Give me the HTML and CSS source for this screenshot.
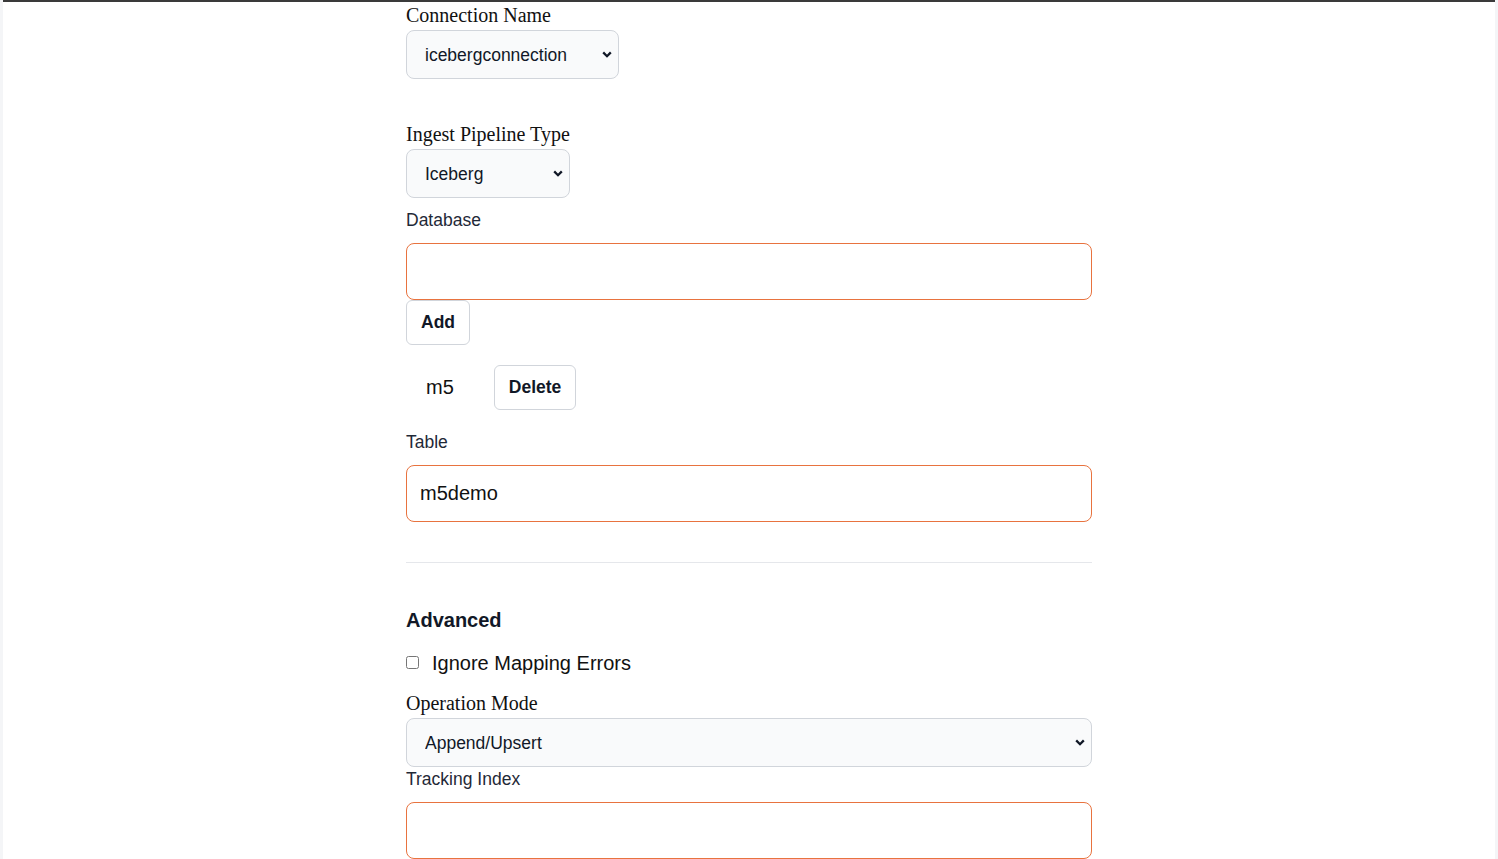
FILE: index.html
```
<!DOCTYPE html>
<html lang="en">
<head>
	<meta charset="UTF-8">
	<title>Ingest Pipeline</title>
	<link rel="stylesheet" href="styles.css">
</head>
<body>

<div class="topbar"></div>

<div class="page">
	<form class="form">
		<div class="field">
			<label class="label-serif">Connection Name</label>
			<select class="select select-conn">
				<option>icebergconnection</option>
			</select>
		</div>

		<div class="field field-type">
			<label class="label-serif">Ingest Pipeline Type</label>
			<select class="select select-type">
				<option>Iceberg</option>
			</select>
		</div>

		<div class="field field-db">
			<label class="label-sans">Database</label>
			<input class="text-input" type="text">
			<button type="button" class="btn">Add</button>
			<div class="item-row">
				<span class="item-name">m5</span>
				<button type="button" class="btn">Delete</button>
			</div>
		</div>

		<div class="field field-table">
			<label class="label-sans">Table</label>
			<input class="text-input" type="text" value="m5demo">
		</div>

		<hr class="divider">

		<h3 class="section-title">Advanced</h3>

		<label class="check-row">
			<input type="checkbox" class="check">
			<span>Ignore Mapping Errors</span>
		</label>

		<div class="field field-mode">
			<label class="label-serif">Operation Mode</label>
			<select class="select select-full">
				<option>Append/Upsert</option>
			</select>
		</div>

		<div class="field field-tracking">
			<label class="label-sans">Tracking Index</label>
			<input class="text-input" type="text">
		</div>
	</form>
</div>

</body>
</html>
```

FILE: styles.css
```
*{margin: 0;padding: 0;box-sizing: border-box;}
body{
	background: #fff;
	border-left: 3px solid #f4f5f7;
	border-right: 3px solid #f4f5f7;
	min-height: 100vh;
}
/*顶部细线*/
.topbar{
	height: 2px;
	background: #3a3a3a;
}
.page{
	padding-top: 2px;
}
.form{
	width: 686px;
	margin: 0 auto;
}

/*标签*/
.label-serif{
	display: block;
	font-family: "Liberation Serif", "Times New Roman", serif;
	font-size: 20px;
	line-height: 23px;
	color: #111;
	margin-bottom: 3px;
}
.label-sans{
	display: block;
	font-family: "Liberation Sans", Arial, sans-serif;
	font-size: 17.5px;
	line-height: 20px;
	color: #1f2937;
	margin-bottom: 13px;
}

.field-type{margin-top: 44px;}
.field-db{margin-top: 12px;}
.field-table{margin-top: 22px;}
.field-mode{margin-top: 17px;}
.field-tracking{margin-top: 2px;}

/*下拉框*/
.select{
	display: block;
	height: 49px;
	padding: 0 36px 0 18px;
	font-family: "Liberation Sans", Arial, sans-serif;
	font-size: 17.5px;
	color: #111827;
	background-color: #f9fafb;
	border: 1px solid #d1d5db;
	border-radius: 8px;
	-webkit-appearance: none;
	appearance: none;
	background-image: url("data:image/svg+xml,%3Csvg xmlns='http://www.w3.org/2000/svg' width='10' height='7' viewBox='0 0 10 7'%3E%3Cpath d='M1.2 1.4 5 5.2 8.8 1.4' fill='none' stroke='%23111827' stroke-width='2.3'/%3E%3C/svg%3E");
	background-repeat: no-repeat;
	background-position: right 6px center;
	background-size: 10px 7px;
}
.select-conn{width: 213px;}
.select-type{width: 164px;}
.select-full{width: 100%;}

/*输入框*/
.text-input{
	display: block;
	width: 100%;
	height: 57px;
	padding: 0 13px;
	font-family: "Liberation Sans", Arial, sans-serif;
	font-size: 20px;
	color: #111;
	background: #fff;
	border: 1px solid #e8733f;
	border-radius: 8px;
	outline: none;
}

/*按钮*/
.btn{
	display: block;
	height: 45px;
	padding: 0 14px;
	font-family: "Liberation Sans", Arial, sans-serif;
	font-size: 17.5px;
	font-weight: bold;
	color: #111827;
	background: #fff;
	border: 1px solid #d1d5db;
	border-radius: 6px;
}

.item-row{
	display: flex;
	align-items: center;
	gap: 40px;
	height: 45px;
	margin-top: 20px;
}
.item-name{
	padding-left: 20px;
	font-family: "Liberation Sans", Arial, sans-serif;
	font-size: 20px;
	color: #111;
}

.divider{
	border: 0;
	border-top: 1px solid #e5e7eb;
	margin-top: 40px;
}

.section-title{
	margin-top: 46px;
	font-family: "Liberation Sans", Arial, sans-serif;
	font-size: 20px;
	line-height: 23px;
	font-weight: bold;
	color: #111827;
}

/*复选框*/
.check-row{
	display: flex;
	align-items: center;
	gap: 13px;
	margin-top: 20px;
	height: 23px;
	font-family: "Liberation Sans", Arial, sans-serif;
	font-size: 20px;
	color: #111;
}
.check{
	width: 13px;
	height: 13px;
	margin: 0;
	position: relative;
	top: -1px;
}
```
